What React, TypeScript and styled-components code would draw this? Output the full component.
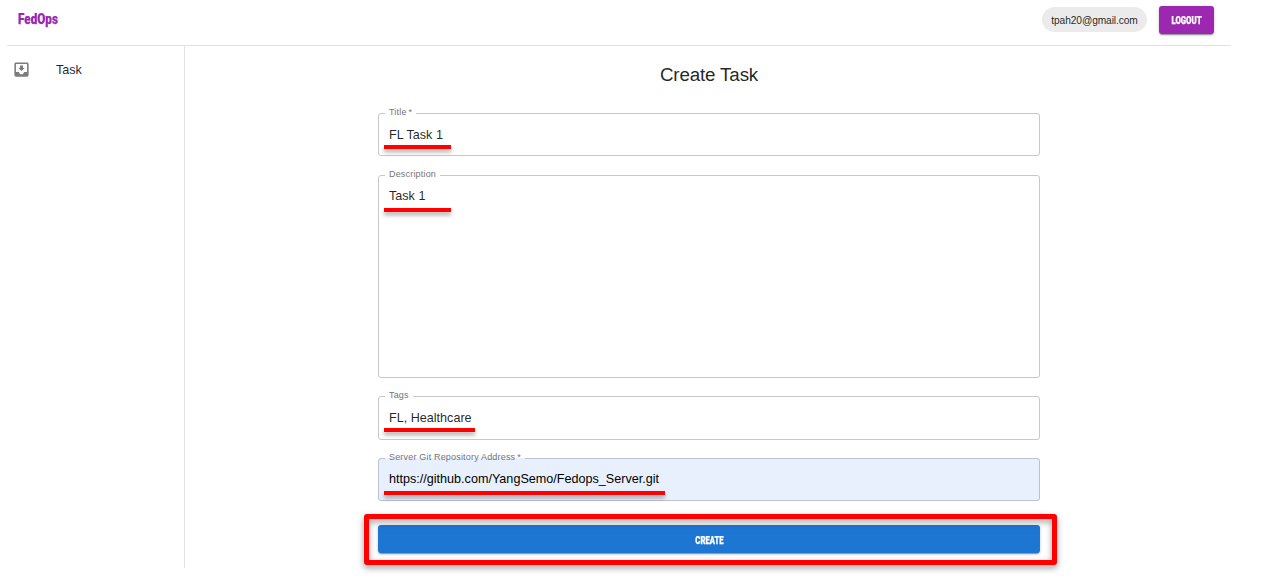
import React from "react";
import styled, { createGlobalStyle } from "styled-components";

const GlobalStyle = createGlobalStyle`
  * { box-sizing: border-box; }
  body {
    margin: 0;
    background: #fff;
    color: rgba(0, 0, 0, 0.87);
    font-family: "Liberation Sans", Arial, sans-serif;
  }
`;

const Page = styled.div`
  display: flex;
  flex-direction: column;
  width: 1264px;
  height: 586px;
  padding: 0 33px 18px 7px;
  overflow: hidden;
`;

const Header = styled.header`
  display: flex;
  align-items: center;
  flex: none;
  height: 46px;
  padding: 0 17px 6px 11px;
  border-bottom: 1px solid #e2e2e2;
`;

const Condensed = styled.span<{ $size: number; $width: number; $scale: number }>`
  display: inline-flex;
  justify-content: center;
  width: ${(p) => p.$width}px;
  font-family: "Roboto", sans-serif;
  font-size: ${(p) => p.$size}px;
  font-weight: 900;
  line-height: 1;
  white-space: nowrap;
  -webkit-text-stroke: 0.25px currentColor;
  transform: scaleX(${(p) => p.$scale});
`;

const Brand = styled.div`
  flex: 1;
  display: flex;
  color: #9c27b0;
`;

const Chip = styled.div`
  display: flex;
  align-items: center;
  justify-content: center;
  width: 105px;
  height: 25px;
  margin-right: 12px;
  padding-top: 1px;
  border-radius: 13px;
  background: #ebebeb;
  font-size: 10.2px;
  letter-spacing: -0.1px;
`;

const Button = styled.button<{ $color: string; $width: string }>`
  display: flex;
  align-items: center;
  justify-content: center;
  width: ${(p) => p.$width};
  height: 28px;
  padding: 2px 0 0;
  border: 0;
  border-radius: 3px;
  background: ${(p) => p.$color};
  color: #fff;
  box-shadow: 0 2px 1px -1px rgba(0, 0, 0, 0.3), 0 1px 3px rgba(0, 0, 0, 0.25);
`;

const Body = styled.div`
  display: flex;
  flex: 1;
  min-height: 0;
`;

const Sidebar = styled.nav`
  width: 178px;
  border-right: 1px solid #e2e2e2;
`;

const NavItem = styled.a`
  display: flex;
  align-items: center;
  gap: 25px;
  height: 47px;
  padding-left: 5px;
  font-size: 12.6px;
`;

const NavIcon = styled.svg`
  width: 19px;
  height: 19px;
  fill: #7c7c7c;
`;

const Main = styled.main`
  flex: 1;
  display: flex;
  flex-direction: column;
  align-items: center;
  padding: 17px 0 0 2px;
`;

const Title = styled.h1`
  margin: 0;
  height: 45px;
  font-size: 18.8px;
  font-weight: 400;
  line-height: 23px;
  letter-spacing: -0.15px;
`;

const Form = styled.form`
  display: flex;
  flex-direction: column;
  width: 662px;
`;

const Field = styled.fieldset<{ $height: number; $gap: number; $filled?: boolean }>`
  position: relative;
  height: ${(p) => p.$height}px;
  min-width: 0;
  margin: 0 0 ${(p) => p.$gap}px;
  padding: 0 10px;
  border: 1px solid ${(p) => (p.$filled ? "#b9c3d6" : "#c8c8c8")};
  border-radius: 3px;
  background: ${(p) => (p.$filled ? "#e8f0fe" : "#fff")};
`;

const Legend = styled.legend`
  height: 10px;
  margin-left: -4px;
  padding: 0 4px;
  color: #757575;
  font-size: 9px;
  line-height: 8px;
  letter-spacing: 0.18px;
`;

const Value = styled.div<{ $top: number; $dark?: boolean }>`
  padding-top: ${(p) => p.$top}px;
  font-size: 12.6px;
  line-height: 17px;
  color: ${(p) => (p.$dark ? "#000" : "rgba(0, 0, 0, 0.87)")};
`;

const Underline = styled.span<{ $width: number; $top: number }>`
  position: absolute;
  left: 5px;
  top: ${(p) => p.$top}px;
  width: ${(p) => p.$width}px;
  height: 4px;
  background: #f00;
  box-shadow: 0 3px 4px rgba(0, 0, 0, 0.35);
`;

const Submit = styled.div`
  position: relative;
`;

const Highlight = styled.span`
  position: absolute;
  inset: -11px -17px -12px -14px;
  border: 5px solid #f00;
  border-radius: 3px;
  filter: drop-shadow(0 3px 3px rgba(0, 0, 0, 0.4));
  pointer-events: none;
`;

type Entry = {
  label: string;
  value: string;
  height: number;
  gap: number;
  textTop: number;
  mark: number;
  markTop: number;
  filled?: boolean;
};

const entries: Entry[] = [
  { label: "Title\u2009*", value: "FL Task 1", height: 48, gap: 14, textTop: 9, mark: 67, markTop: 27 },
  { label: "Description", value: "Task 1", height: 208, gap: 13, textTop: 8, mark: 67, markTop: 28 },
  { label: "Tags", value: "FL, Healthcare", height: 49, gap: 13, textTop: 9, mark: 91, markTop: 27 },
  {
    label: "Server Git Repository Address\u2009*",
    value: "https://github.com/YangSemo/Fedops_Server.git",
    height: 48,
    gap: 24,
    textTop: 8,
    mark: 281,
    markTop: 28,
    filled: true,
  },
];

export default function App() {
  return (
    <>
      <GlobalStyle />
      <Page>
        <Header>
          <Brand>
            <Condensed $size={15} $width={40} $scale={0.78}>FedOps</Condensed>
          </Brand>
          <Chip>tpah20@gmail.com</Chip>
          <Button type="button" $color="#9c27b0" $width="55px">
            <Condensed $size={11} $width={31} $scale={0.71}>LOGOUT</Condensed>
          </Button>
        </Header>
        <Body>
          <Sidebar>
            <NavItem>
              <NavIcon viewBox="0 0 24 24">
                <path d="M19 3H4.99c-1.11 0-1.98.9-1.98 2L3 19c0 1.1.88 2 1.99 2H19c1.1 0 2-.9 2-2V5c0-1.1-.9-2-2-2zm0 12h-4c0 1.66-1.35 3-3 3s-3-1.34-3-3H4.99V5H19v10zm-3-5h-2V7h-4v3H8l4 4 4-4z" />
              </NavIcon>
              Task
            </NavItem>
          </Sidebar>
          <Main>
            <Title>Create Task</Title>
            <Form>
              {entries.map((e) => (
                <Field key={e.label} $height={e.height} $gap={e.gap} $filled={e.filled}>
                  <Legend>{e.label}</Legend>
                  <Value $top={e.textTop} $dark={e.filled}>{e.value}</Value>
                  <Underline $width={e.mark} $top={e.markTop} />
                </Field>
              ))}
              <Submit>
                <Button type="button" $color="#1c76d2" $width="100%">
                  <Condensed $size={11} $width={29} $scale={0.7}>CREATE</Condensed>
                </Button>
                <Highlight />
              </Submit>
            </Form>
          </Main>
        </Body>
      </Page>
    </>
  );
}
